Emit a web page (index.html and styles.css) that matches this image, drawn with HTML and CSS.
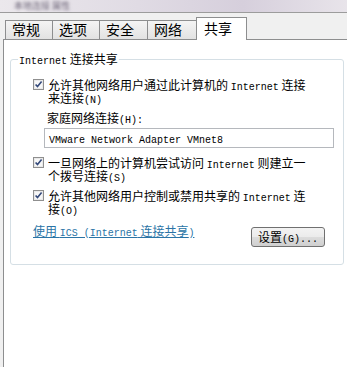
FILE: index.html
```html
<!DOCTYPE html>
<html lang="zh-CN">
<head>
  <meta charset="UTF-8">
  <title>本地连接 属性</title>
  <link rel="stylesheet" href="styles.css">
</head>
<body>

  <div class="titlebar"><span>本地连接 属性</span></div>

  <div class="tabs">
    <div class="tab">常规</div>
    <div class="tab">选项</div>
    <div class="tab">安全</div>
    <div class="tab">网络</div>
    <div class="tab active">共享</div>
  </div>

  <div class="panel">
    <fieldset class="group">
      <legend><span class="en">Internet</span> 连接共享</legend>

      <div class="opt">
        <svg class="check" width="11" height="11" viewBox="0 0 11 11"><rect x="0.5" y="0.5" width="10" height="10" fill="#e9e9e9" stroke="#8f8f8f"/><rect x="2" y="2" width="7" height="7" fill="#f7f7f7"/><path d="M2.6 5.4 L4.5 7.6 L8.6 2.6" fill="none" stroke="#34497a" stroke-width="1.6"/></svg>
        <p>允许其他网络用户通过此计算机的 <span class="en">Internet</span> 连接<br>来连接<span class="en">(<u>N</u>)</span></p>
      </div>

      <div class="home">
        <p>家庭网络连接<span class="en">(<u>H</u>):</span></p>
        <div class="input"><span class="en">VMware Network Adapter VMnet8</span></div>
      </div>

      <div class="opt">
        <svg class="check" width="11" height="11" viewBox="0 0 11 11"><rect x="0.5" y="0.5" width="10" height="10" fill="#e9e9e9" stroke="#8f8f8f"/><rect x="2" y="2" width="7" height="7" fill="#f7f7f7"/><path d="M2.6 5.4 L4.5 7.6 L8.6 2.6" fill="none" stroke="#34497a" stroke-width="1.6"/></svg>
        <p>一旦网络上的计算机尝试访问 <span class="en">Internet</span> 则建立一<br>个拨号连接<span class="en">(<u>S</u>)</span></p>
      </div>

      <div class="opt">
        <svg class="check" width="11" height="11" viewBox="0 0 11 11"><rect x="0.5" y="0.5" width="10" height="10" fill="#e9e9e9" stroke="#8f8f8f"/><rect x="2" y="2" width="7" height="7" fill="#f7f7f7"/><path d="M2.6 5.4 L4.5 7.6 L8.6 2.6" fill="none" stroke="#34497a" stroke-width="1.6"/></svg>
        <p>允许其他网络用户控制或禁用共享的 <span class="en">Internet</span> 连<br>接<span class="en">(<u>O</u>)</span></p>
      </div>

      <div class="foot">
        <a href="#">使用 <span class="en">ICS (Internet</span> 连接共享<span class="en">)</span></a>
        <button>设置<span class="en">(<u>G</u>)...</span></button>
      </div>
    </fieldset>
  </div>

</body>
</html>
```

FILE: styles.css
```css
* { margin: 0; padding: 0; box-sizing: border-box; }
body { width: 347px; height: 367px; overflow: hidden; background: #f0f0f0; font-family: "Noto Sans CJK SC", sans-serif; font-size: 12px; color: #000; }
.en { font-family: "Liberation Mono", monospace; font-size: 10px; line-height: 8px; }
u { text-decoration: none; }

.titlebar { height: 13px; border-bottom: 1px solid #9c9c9c; background: linear-gradient(90deg, #ebe8ec, #e0dbe4 40%, #d6cfdc 70%, #e8e4ea); }
.titlebar span { display: block; height: 12px; padding-left: 14px; font-size: 9px; line-height: 12px; color: #6c6477; filter: blur(1.4px); }

.tabs { display: flex; align-items: flex-end; height: 26px; padding-left: 5px; }
.tab { width: 48px; height: 19px; margin-right: -1px; padding-left: 6px; border: 1px solid #8d8e8f; border-bottom: 0; background: linear-gradient(#f4f4f4, #e2e2e2); font-size: 14px; line-height: 17px; }
.tab:nth-child(3) { width: 49px; }
.tab:nth-child(4) { width: 50px; }
.tab.active { position: relative; z-index: 1; width: 51px; height: 23px; margin-bottom: -1px; padding-left: 7px; background: #fff; line-height: 20px; }

.panel { height: 328px; margin-left: 3px; padding: 12px 0 0 6px; background: #fff; border-top: 1px solid #8d8e8f; border-left: 1px solid #8d8e8f; }

.group { width: 334px; padding: 0 0 17px; border: 1px solid #d5dfe5; border-radius: 3px; min-inline-size: 0; }
.group legend { height: 14px; margin-left: 7px; padding: 0 1px; line-height: 14px; }

.opt { display: flex; align-items: flex-start; gap: 4px; height: 24px; margin: 9px 0 0 22px; line-height: 12px; }
.opt:first-of-type { margin-top: 13px; }
.opt p { height: 24px; }
.check { flex: none; }

.home { margin: 9px 0 0 33px; line-height: 12px; }
.home p { height: 12px; padding-left: 3px; }
.input { width: 290px; height: 20px; margin-top: 4px; padding-left: 4px; border: 1px solid #b5b8bd; line-height: 18px; }

.foot { display: flex; justify-content: space-between; align-items: flex-start; height: 22px; margin-top: 11px; padding: 0 18px 0 22px; line-height: 12px; }
.foot a { display: block; height: 12px; color: #2a74a6; text-decoration: underline; }
.foot button { width: 74px; height: 20px; margin-top: 2px; border: 1px solid #707070; border-radius: 3px; background: linear-gradient(#f3f3f3, #ebebeb 50%, #dcdcdc 51%, #cfcfcf); font-family: "Noto Sans CJK SC", sans-serif; font-size: 12px; color: #000; line-height: 16px; }
```
